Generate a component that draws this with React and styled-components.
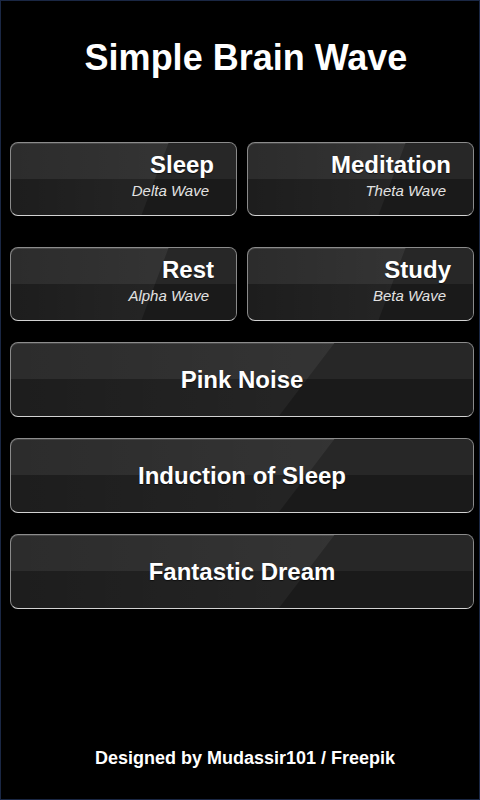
import React from 'react'
import styled, { createGlobalStyle } from 'styled-components'

const GlobalStyle = createGlobalStyle`
    body {
        margin: 0;
        background: #000;
        font-family: "Liberation Sans", Arial, sans-serif;
    }
`

const Screen = styled.div`
    width: 480px;
    height: 800px;
    box-sizing: border-box;
    border: 1px solid #1a2744;
    background: #000;
    display: flex;
    flex-direction: column;
    padding: 0 5px 0 9px;
`

const Title = styled.h1`
    margin: 0;
    padding-top: 36px;
    font-size: 36px;
    line-height: 42px;
    font-weight: bold;
    color: #fff;
    text-align: center;
    padding-left: 8px;
`

const WaveGrid = styled.div`
    margin-top: 63px;
    display: grid;
    grid-template-columns: 1fr 1fr;
    column-gap: 10px;
    row-gap: 31px;
`

const Stack = styled.div`
    margin-top: 21px;
    display: flex;
    flex-direction: column;
    gap: 21px;
`

const GlassButton = styled.button`
    position: relative;
    overflow: hidden;
    box-sizing: border-box;
    height: ${({ tall }) => (tall ? '75px' : '74px')};
    width: 100%;
    margin: 0;
    border-radius: 8px;
    border: 1px solid;
    border-color: #8c8c8c #8a8a8a #d2d2d2 #8a8a8a;
    background:
        linear-gradient(to right, rgba(255,255,255,0) 0%, rgba(255,255,255,0.035) 65%, rgba(255,255,255,0.04) 100%),
        linear-gradient(to bottom, #2c2c2c 0%, #2c2c2c 50%, #1d1d1d 50%, #1d1d1d 100%);
    box-shadow: inset 0 1px 0 rgba(255,255,255,0.12);
    font-family: inherit;
    color: #fff;
    cursor: pointer;
    display: flex;
    flex-direction: column;
    align-items: ${({ centered }) => (centered ? 'center' : 'flex-end')};
    justify-content: ${({ centered }) => (centered ? 'center' : 'flex-start')};
    padding: ${({ centered }) => (centered ? '0' : '8px 22px 0 0')};

    &::before {
        content: '';
        position: absolute;
        inset: 0;
        background: linear-gradient(to bottom, #272727 0%, #272727 50%, #1a1a1a 50%, #1a1a1a 100%);
        clip-path: polygon(70% 0, 100% 0, 100% 100%, 58% 100%);
    }
`

const Label = styled.span`
    position: relative;
    font-size: 24px;
    line-height: 27px;
    font-weight: bold;
    color: #fff;
    text-shadow: 0 1px 1px rgba(0,0,0,0.6);
    white-space: nowrap;
`

const SubLabel = styled.span`
    position: relative;
    margin-top: 4px;
    margin-right: 5px;
    font-size: 15px;
    line-height: 18px;
    font-style: italic;
    color: #e2e2e2;
    white-space: nowrap;
`

const Footer = styled.div`
    margin-top: auto;
    padding-bottom: 31px;
    padding-left: 6px;
    font-size: 18px;
    line-height: 20px;
    font-weight: bold;
    color: #fff;
    text-align: center;
`

const waves = [
    { name: 'Sleep', wave: 'Delta Wave' },
    { name: 'Meditation', wave: 'Theta Wave' },
    { name: 'Rest', wave: 'Alpha Wave' },
    { name: 'Study', wave: 'Beta Wave' },
]

const sounds = ['Pink Noise', 'Induction of Sleep', 'Fantastic Dream']

const App = () => {
    return (
        <>
            <GlobalStyle />
            <Screen>
                <Title>Simple Brain Wave</Title>
                <WaveGrid>
                    {waves.map((w) => (
                        <GlassButton key={w.name}>
                            <Label>{w.name}</Label>
                            <SubLabel>{w.wave}</SubLabel>
                        </GlassButton>
                    ))}
                </WaveGrid>
                <Stack>
                    {sounds.map((s) => (
                        <GlassButton key={s} tall centered>
                            <Label>{s}</Label>
                        </GlassButton>
                    ))}
                </Stack>
                <Footer>Designed by Mudassir101 / Freepik</Footer>
            </Screen>
        </>
    )
}

export default App
